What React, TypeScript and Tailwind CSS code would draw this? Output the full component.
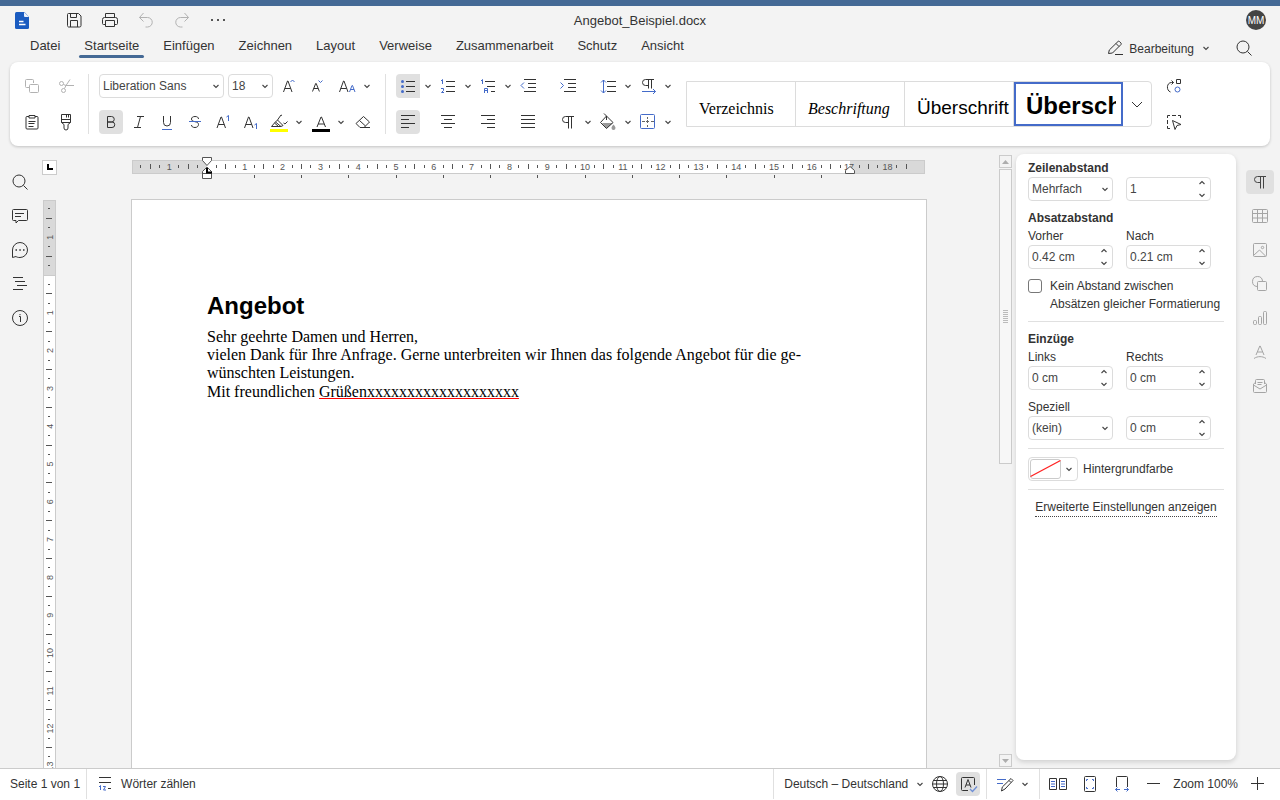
import type { ReactNode } from "react";

const BLUE = "#446bc9";
const CM = 37.8;

function Icon({ children, className = "" }: { children: ReactNode; className?: string }) {
  return (
    <svg width="24" height="24" viewBox="0 0 24 24" fill="none" stroke="currentColor" strokeWidth="1" className={`shrink-0 ${className}`} aria-hidden="true">
      {children}
    </svg>
  );
}

function Chevron() {
  return (
    <svg width="8" height="8" viewBox="0 0 8 8" fill="none" stroke="#444" strokeWidth="1.1" className="pointer-events-none shrink-0" aria-hidden="true">
      <path d="M1.5 3 4 5.5 6.5 3" />
    </svg>
  );
}

function Tool({ label, children, active = false, disabled = false }: { label: string; children: ReactNode; active?: boolean; disabled?: boolean }) {
  return (
    <button type="button" aria-label={label} disabled={disabled} className={`flex h-6 w-6 shrink-0 items-center justify-center rounded ${active ? "bg-[#e0e0e0]" : ""} ${disabled ? "text-[#b2b2b2]" : ""}`}>
      <Icon>{children}</Icon>
    </button>
  );
}

function Split({ label, children, active = false }: { label: string; children: ReactNode; active?: boolean }) {
  return (
    <div className="flex w-10 shrink-0 items-center">
      <button type="button" aria-label={label} className={`flex h-6 w-6 items-center justify-center rounded-l ${active ? "bg-[#e0e0e0]" : ""}`}>
        <Icon>{children}</Icon>
      </button>
      <button type="button" aria-label={`${label}: Optionen`} className="flex h-6 w-4 items-center justify-center">
        <Chevron />
      </button>
    </div>
  );
}

function Separator() {
  return <div className="w-px shrink-0 self-stretch bg-[#e0e0e0]" />;
}

function SelectBox({ label, value, className }: { label: string; value: string; className: string }) {
  return (
    <div className={`relative flex h-6 items-center ${className}`}>
      <select aria-label={label} defaultValue={value} className="h-6 w-full appearance-none rounded border border-[#dcdcdc] bg-white pl-[3px] text-xs text-[#444]">
        <option>{value}</option>
      </select>
      <span className="pointer-events-none absolute right-1 flex">
        <Chevron />
      </span>
    </div>
  );
}

function Spinner({ id, label, value }: { id: string; label?: string; value: string }) {
  return (
    <div className="flex h-6 w-[85px] items-center rounded border border-[#dcdcdc] bg-white">
      <input id={id} aria-label={label} defaultValue={value} className="w-full min-w-0 flex-1 bg-transparent pl-[3px] text-xs text-[#444] outline-none" />
      <div className="flex flex-col gap-1 pr-1">
        <button type="button" aria-label="Erhöhen" className="flex h-2 rotate-180"><Chevron /></button>
        <button type="button" aria-label="Verringern" className="flex h-2"><Chevron /></button>
      </div>
    </div>
  );
}

/* Icon shapes shared by several buttons */
const searchShape = (
  <>
    <circle cx="11" cy="11" r="6" />
    <path d="m15.5 15.5 4 4" />
  </>
);
const pilcrowShape = <path d="M18 6.5H9.5a3 3 0 0 0 0 6h3M12.5 6.5v12M15.5 6.5v12" />;

function TitleBar() {
  return (
    <div className="grid h-7 grid-cols-[1fr_auto_1fr] items-center">
      <div className="flex items-center pl-2.5">
        <svg width="24" height="24" viewBox="0 0 24 24" className="mr-[22px]" aria-hidden="true">
          <path d="M6.500 4h8l4.500 5v10.500a1.500 1.500 0 0 1-1.500 1.500h-11a1.500 1.500 0 0 1-1.500-1.500v-14a1.500 1.500 0 0 1 1.500-1.500z" fill="#1a5bc0" />
          <path d="M14 4 19 9h-4a1 1 0 0 1-1-1z" fill="#e9f0fc" />
          <path d="M9 13.500h4.500M9 16.500h6.500" stroke="#fff" strokeWidth="1.300" />
        </svg>
        <button type="button" aria-label="Speichern" className="flex w-9 justify-center">
          <Icon><path d="M6.500 5.500h10l2.500 2.500v9.500a1.500 1.500 0 0 1-1.500 1.500h-11A1.500 1.500 0 0 1 5.500 17.500v-11a1 1 0 0 1 1-1zM8.500 5.500v4h6v-4M8.500 19v-6.500h7V19" /></Icon>
        </button>
        <button type="button" aria-label="Drucken" className="flex w-9 justify-center">
          <Icon><path d="M7.500 9.500v-4h9v4M7.500 16.500h-2a1 1 0 0 1-1-1v-4a2 2 0 0 1 2-2h11a2 2 0 0 1 2 2v4a1 1 0 0 1-1 1h-2M7.500 12.500h9v6h-9z" /></Icon>
        </button>
        <button type="button" aria-label="Rückgängig" disabled className="flex w-9 justify-center text-[#b2b2b2]">
          <Icon><path d="m9.500 5-4 4.500 4 4M5.500 9.500h8a4.500 4.500 0 0 1 0 9.500h-2" /></Icon>
        </button>
        <button type="button" aria-label="Wiederholen" disabled className="flex w-9 justify-center text-[#b2b2b2]">
          <Icon><path d="m14.500 5 4 4.500-4 4M18.500 9.500h-8a4.500 4.500 0 0 0 0 9.500h2" /></Icon>
        </button>
        <button type="button" aria-label="Mehr" className="flex w-9 justify-center text-[#555]">
          <Icon><path d="M5 12h2M11 12h2M17 12h2" strokeWidth="2" /></Icon>
        </button>
      </div>
      <h1 className="pt-0.5 text-[13px]">Angebot_Beispiel.docx</h1>
      <div className="flex justify-end pr-3.5">
        <span className="flex h-5 w-5 items-center justify-center rounded-full bg-[#444] text-[10px] text-white">MM</span>
      </div>
    </div>
  );
}

const tabs = ["Datei", "Startseite", "Einfügen", "Zeichnen", "Layout", "Verweise", "Zusammenarbeit", "Schutz", "Ansicht"];

function TabBar() {
  return (
    <div className="flex h-7 items-start justify-between pl-[25px]">
      <nav className="flex gap-3.5" aria-label="Register">
        {tabs.map((tab) => (
          <button key={tab} type="button" className="flex flex-col text-[13px]">
            <span className="px-[5px] pt-[3px] leading-[18px]">{tab}</span>
            <span className={`h-[3px] w-full rounded-full ${tab === "Startseite" ? "bg-[#446995]" : ""}`} />
          </button>
        ))}
      </nav>
      <div className="flex h-7 items-center pr-6">
        <button type="button" className="flex items-center text-xs">
          <Icon><path d="m5.500 17.500.800-3.500 8.700-8.500a1 1 0 0 1 1.400 0l1.600 1.600a1 1 0 0 1 0 1.400L9.500 17zM13 7.500l3 3M12 18.500h8" /></Icon>
          <span className="pt-px pr-2 pl-[2px]">Bearbeitung</span>
          <Chevron />
        </button>
        <button type="button" aria-label="Suchen" className="ml-[22px] flex">
          <Icon>{searchShape}</Icon>
        </button>
      </div>
    </div>
  );
}

function ClipboardGroup() {
  return (
    <div className="grid grid-cols-2 gap-x-2.5 gap-y-3">
      <Tool label="Kopieren" disabled><path d="M9 13.500H6.500a1 1 0 0 1-1-1v-6a1 1 0 0 1 1-1h6a1 1 0 0 1 1 1V9M10.500 10.500h7a1 1 0 0 1 1 1v6a1 1 0 0 1-1 1h-7a1 1 0 0 1-1-1v-6a1 1 0 0 1 1-1z" /></Tool>
      <Tool label="Ausschneiden" disabled><circle cx="7.500" cy="9.500" r="2" /><circle cx="9.500" cy="16.500" r="2" /><path d="M9.500 10.500 12 11.500h8M10.500 14.500 12 11.500l4-6" /></Tool>
      <Tool label="Einfügen"><path d="M9 6.500H7a1 1 0 0 0-1 1V18a1 1 0 0 0 1 1h10a1 1 0 0 0 1-1V7.500a1 1 0 0 0-1-1h-2M9 5.500h6v2.500H9zM8.500 11.500h7M8.500 13.500h6M8.500 16.500h5" /></Tool>
      <Tool label="Format übertragen"><path d="M7.500 4.500h9v8h-9zM7.500 9.500h9M12.500 4.500v3M14.500 4.500v3M7.500 12.500l2.500 2v3.500a2 2 0 0 0 4 0v-3.500l2.500-2" /></Tool>
    </div>
  );
}

function FontGroup() {
  return (
    <div className="flex flex-col gap-3">
      <div className="flex gap-1">
        <SelectBox label="Schriftart" value="Liberation Sans" className="w-[125px]" />
        <SelectBox label="Schriftgröße" value="18" className="w-[45px]" />
        <Tool label="Schrift vergrößern"><path d="m6.500 18 4-11h.500l4 11M7.700 14.500h6" /><path d="m13.500 8 2-2 2 2" stroke={BLUE} /></Tool>
        <Tool label="Schrift verkleinern"><path d="m7.500 17.500 3.200-8h.500l3.200 8M8.700 14.500h4.500" /><path d="m13.500 6.500 2 2 2-2" stroke={BLUE} /></Tool>
        <div className="flex w-10">
          <button type="button" aria-label="Groß-/Kleinschreibung" className="flex h-6 w-7 items-center justify-center">
            <Icon><path d="m4.500 18 4-11H9l4 11M5.700 14.500h6" /><path d="m14.500 18 2.500-6.500h.500L20 18M15.500 15.500h3.500" stroke={BLUE} /></Icon>
          </button>
          <button type="button" aria-label="Groß-/Kleinschreibung: Optionen" className="flex h-6 w-3 items-center justify-center"><Chevron /></button>
        </div>
      </div>
      <div className="flex gap-1">
        <Tool label="Fett" active><path d="M8.500 6.500h4a2.500 2.500 0 0 1 0 5.500h-4zM8.500 12h4.500a2.700 2.700 0 0 1 0 5.500H8.500z" /></Tool>
        <Tool label="Kursiv"><path d="M10 6.500h7M7 17.500h7M13.500 6.500l-3 11" /></Tool>
        <Tool label="Unterstrichen"><path d="M8.500 6v6.500a3.500 3.500 0 0 0 7 0V6" /><path d="M7 19.500h10" stroke={BLUE} /></Tool>
        <Tool label="Durchgestrichen"><path d="M15.500 9c0-1.700-1.300-2.500-3.500-2.500S8.500 7.500 8.500 9s1 2.200 3.500 2.700c2.500.500 3.500 1.300 3.500 2.800s-1.200 3-3.500 3-3.500-1-3.500-2.500" /><path d="M6 11.500h12" stroke={BLUE} /></Tool>
        <Tool label="Hochgestellt"><path d="m6 18 4-11h.500l4 11M7.200 14.500h6" /><path d="m15.500 7 2-1.500V11" stroke={BLUE} /></Tool>
        <Tool label="Tiefgestellt"><path d="m5.500 18 4-11h.500l4 11M6.700 14.500h6" /><path d="m15.500 15 2-1.500V19" stroke={BLUE} /></Tool>
        <div className="flex gap-0.5">
          <Split label="Hervorhebungsfarbe">
            <path d="m10.500 10 3.500-5 1 .500M10.500 10l5.500 5.500M16.500 13l1.500 1 2.500-2.500M8.500 12l5.500 4.500H4.500L7.500 13l3-3M7.500 13l4 3.500M16 15.500l-2 1" />
            <path d="M3 20.500h18" stroke="#ff0" strokeWidth="3" />
          </Split>
          <Split label="Schriftfarbe">
            <path d="m8 17 4-10h.500l4 10M9.200 14h6" />
            <path d="M3 20.500h18" stroke="#000" strokeWidth="3" />
          </Split>
          <Tool label="Formatierung löschen"><path d="m5 13.500 7.500-7 6 5.500-5.500 5.500H9zM8.500 10.500l6 5.500M11 17.500h8" /></Tool>
        </div>
      </div>
    </div>
  );
}

function ParagraphGroup() {
  return (
    <div className="grid grid-cols-[repeat(7,40px)] gap-y-3">
      <Split label="Aufzählung" active><path d="M10 7.500h9M10 12.500h9M10 17.500h9" /><g fill={BLUE} stroke="none"><circle cx="6.500" cy="7.500" r="1.500" /><circle cx="6.500" cy="12.500" r="1.500" /><circle cx="6.500" cy="17.500" r="1.500" /></g></Split>
      <Split label="Nummerierung"><path d="M10 7.500h9M10 12.500h9M10 17.500h9" /><path d="m5 7 1.500-1.500V10M5 14.500h2.500v2L5.500 18.500H8" stroke={BLUE} /></Split>
      <Split label="Gliederung"><path d="M9 7.500h10M11 12.500h8M15 17.500h4" /><path d="m5 7 1.500-1.500V10M8.500 19v-4.500h3V19M8.500 16.500h3" stroke={BLUE} /></Split>
      <Tool label="Einzug verkleinern"><path d="M8 5.500h12M12 9.500h8M12 13.500h8M8 17.500h12" /><path d="M8 8.500 5 11.500l3 3" stroke={BLUE} /></Tool>
      <Tool label="Einzug vergrößern"><path d="M8 5.500h12M12 9.500h8M12 13.500h8M8 17.500h12" /><path d="m4.500 8.500 3 3-3 3" stroke={BLUE} /></Tool>
      <Split label="Zeilenabstand"><path d="M11 7.500h9M11 12.500h9M11 17.500h9" /><path d="M7.500 6v13M5 8.500 7.500 6 10 8.500M5 16.500 7.500 19l2.500-2.500" stroke={BLUE} /></Split>
      <Split label="Textrichtung"><path d="M18 5.500H9.500a3 3 0 0 0 0 6h3M12.500 5.500v9M15.500 5.500v9" /><path d="M6 17.500h13.500M17 15l2.500 2.500L17 20" stroke={BLUE} /></Split>
      <Tool label="Linksbündig" active><path d="M5 5.500h14M5 9.500h8M5 13.500h14M5 17.500h8" /></Tool>
      <Tool label="Zentriert"><path d="M5 5.500h14M8 9.500h8M5 13.500h14M8 17.500h8" /></Tool>
      <Tool label="Rechtsbündig"><path d="M5 5.500h14M11 9.500h8M5 13.500h14M11 17.500h8" /></Tool>
      <Tool label="Blocksatz"><path d="M5 5.500h14M5 9.500h14M5 13.500h14M5 17.500h14" /></Tool>
      <Split label="Nicht druckbare Zeichen">{pilcrowShape}</Split>
      <Split label="Schattierung">
        <path d="M6 13h11l-6.500 5.500z" fill="#999" stroke="none" />
        <path d="m10.500 6 6.500 6.500-6.500 6-6-6zM8 3.500l2.500 2.500v4" />
        <path d="M17.500 14.500c1.300 1.700 2 2.500 2 3.500a2 2 0 0 1-4 0c0-1 .700-1.800 2-3.500z" fill="#999" stroke="none" />
      </Split>
      <Split label="Rahmen"><path d="M11.500 7v2M11.500 10v3M11.500 15v2M6 11.500h3M10 11.500h3M15 11.500h3" stroke="#666" /><rect x="4.500" y="4.500" width="14" height="14" rx="1" stroke={BLUE} /></Split>
    </div>
  );
}

function StyleGallery() {
  const cell = "flex h-full w-[109px] items-center overflow-hidden border-r border-[#dcdcdc] pl-3 text-black";
  return (
    <div className="flex h-[46px] shrink-0 self-center rounded-r border border-[#dcdcdc]">
      <button type="button" className={`${cell} pt-2.5 font-['Liberation_Serif',serif] text-base`}>Verzeichnis</button>
      <button type="button" className={`${cell} pt-2.5 font-['Liberation_Serif',serif] text-base italic`}>Beschriftung</button>
      <button type="button" className={`${cell} pt-2 text-[19px]`}>Überschrift</button>
      <button type="button" className="flex h-full w-[109px] items-center border-2 border-[#446bc9] pr-[5px] pl-2.5 text-2xl font-bold text-black">
        <span className="overflow-hidden pt-1">Überschrift</span>
      </button>
      <button type="button" aria-label="Weitere Formatvorlagen" className="flex h-full w-7 items-center justify-center">
        <Icon><path d="m7 10 5 5 5-5" /></Icon>
      </button>
    </div>
  );
}

function Ribbon() {
  return (
    <div className="mx-2.5 flex gap-2.5 rounded-lg bg-white px-2.5 py-3 shadow-[0_1px_3px_rgba(0,0,0,0.2)]">
      <ClipboardGroup />
      <Separator />
      <FontGroup />
      <Separator />
      <ParagraphGroup />
      <StyleGallery />
      <div className="flex flex-col gap-3">
        <Tool label="Ersetzen"><path d="M8.500 18c-4.500-1.500-4-9.500 1-9.500h2M9.500 6.500l2 2-2 2M14.500 5.500h4v4h-4z" /><circle cx="15.500" cy="15.500" r="2.500" stroke={BLUE} /></Tool>
        <Tool label="Auswählen"><path d="M5.500 8V5.500H8M10 5.500h4M16 5.500h2.500V8M5.500 10v4M5.500 16v2.500H8M10.500 10.500l8.500 4-4 1-2 4z" /></Tool>
      </div>
    </div>
  );
}

function LeftBar() {
  return (
    <aside className="flex w-10 shrink-0 flex-col items-center gap-2.5 pt-6">
      <Tool label="Suche">{searchShape}</Tool>
      <Tool label="Kommentare"><path d="M5.500 5.500h13a1 1 0 0 1 1 1v9a1 1 0 0 1-1 1h-8l-2.500 2.500v-2.500H5.500a1 1 0 0 1-1-1v-9a1 1 0 0 1 1-1zM7 9.500h9M7 12.500h6" /></Tool>
      <Tool label="Chat"><path d="M4.500 19.500v-7.500a7.500 7.500 0 1 1 7.500 7.500c-2 0-3-.300-4-1z" /><path d="M7.500 12h1.500M11.300 12h1.500M15 12h1.500" strokeWidth="1.500" /></Tool>
      <Tool label="Überschriften"><path d="M5 5.500h10M7 9.500h10M9 13.500h10M5 17.500h10" /></Tool>
      <Tool label="Informationen"><circle cx="12" cy="12" r="7.500" /><path d="M11 10.500h1.500V16M12 8v1.200" /></Tool>
    </aside>
  );
}

function RightBar() {
  return (
    <aside className="flex w-11 shrink-0 flex-col items-center gap-2.5 pt-6 pl-1 text-[#a5a5a5]">
      <button type="button" aria-label="Absatzeinstellungen" className="flex h-6 w-7 items-center justify-center rounded bg-[#e0e0e0] text-[#444]"><Icon>{pilcrowShape}</Icon></button>
      <Tool label="Tabelle"><path d="M4.500 6.500a1 1 0 0 1 1-1h13a1 1 0 0 1 1 1v11a1 1 0 0 1-1 1h-13a1 1 0 0 1-1-1zM4.500 9.500h15M4.500 14h15M9.500 5.500v13M14.500 5.500v13" /></Tool>
      <Tool label="Bild"><rect x="5.500" y="5.500" width="13" height="13" rx="1" /><circle cx="14.500" cy="9.500" r="1.200" /><path d="m5.500 17.500 6-5.500 6 6" /></Tool>
      <Tool label="Form"><path d="M9 14.500a5 5 0 1 1 5.500-5.500" /><rect x="9.500" y="9.500" width="9" height="9" rx="1" /></Tool>
      <Tool label="Diagramm"><rect x="5.500" y="14.500" width="3" height="4" rx="1" /><rect x="10.500" y="10.500" width="3" height="8" rx="1" /><rect x="15.500" y="5.500" width="3" height="13" rx="1" /></Tool>
      <Tool label="TextArt"><path d="m8 15 3.800-9h.400l3.800 9M9.300 12h5.400M6 18.500c3.500-2.500 8.500-2.500 12 0" /></Tool>
      <Tool label="Seriendruck"><path d="M7.500 10V6.500a1 1 0 0 1 1-1h7a1 1 0 0 1 1 1V10M7.500 8.500l-2 1.500v7.500a1 1 0 0 0 1 1h11a1 1 0 0 0 1-1V10l-2-1.500M5.500 11l6.500 4 6.500-4M9.500 8.500h5M9.500 10.500h4" /></Tool>
    </aside>
  );
}

function HorizontalRuler() {
  const origin = 76;
  const marks = Array.from({ length: 82 }, (_, i) => i - 7).filter((q) => q !== 0 && q !== 68);
  return (
    <svg width="796" height="26" viewBox="0 0 796 26" className="shrink-0" aria-hidden="true">
      <rect x="1.500" y="5.500" width="792" height="13" fill="#fff" stroke="#cbcbcb" />
      <path d="M2 6h74v12H2zM719 6h74v12h-74z" fill="#d9d9d9" />
      {marks.map((q) => {
        const x = Math.floor(origin + (q * CM) / 4) + 0.5;
        if (x > 788) return null;
        if (q % 4 === 0)
          return <text key={q} x={origin + (q * CM) / 4} y="15" textAnchor="middle" fontSize="9" fill="#555">{Math.abs(q / 4)}</text>;
        return <path key={q} d={q % 2 === 0 ? `M${x} 9v5` : `M${x} 10v3`} stroke="#555" />;
      })}
      <text x="718" y="15" textAnchor="middle" fontSize="9" fill="#555">17</text>
      {Array.from({ length: 13 }, (_, i) => (
        <path key={i} d={`M${Math.floor(origin + (i + 1) * CM * 1.25) + 0.5} 20v3`} stroke="#555" />
      ))}
      <path d="M71.500 2.500h9v3l-4.500 5-4.500-5zM71.500 23.500v-7l4.500-4.500 4.500 4.500v7zM71.500 18.500h9" fill="#fff" stroke="#555" />
      <path d="M76 13v4.500h5" fill="none" stroke="#000" strokeWidth="2" />
      <path d="M714.500 18.500v-3l4.500-4 4.500 4v3z" fill="#fff" stroke="#555" />
    </svg>
  );
}

function VerticalRuler() {
  const origin = 75;
  return (
    <svg width="13" height="1123" viewBox="0 0 13 1123" className="shrink-0" aria-hidden="true">
      <rect x="0.500" y="0.500" width="12" height="1122" fill="#fff" stroke="#cbcbcb" />
      <path d="M1 1h11v75H1z" fill="#d9d9d9" />
      <path d="M1 75.500h11" stroke="#cbcbcb" />
      {Array.from({ length: 100 }, (_, i) => i - 7).map((q) => {
        if (q === 0) return null;
        const y = origin + (q * CM) / 4;
        const line = Math.floor(y) + 0.5;
        if (q % 4 === 0)
          return <text key={q} x="0" y="0" transform={`translate(10 ${y}) rotate(-90)`} textAnchor="middle" fontSize="9" fill="#555">{Math.abs(q / 4)}</text>;
        return <path key={q} d={q % 2 === 0 ? `M3 ${line}h6` : `M5 ${line}h2`} stroke="#555" />;
      })}
    </svg>
  );
}

function Editor() {
  return (
    <main className="flex min-w-0 flex-1">
      <div className="flex w-[19px] shrink-0 flex-col overflow-hidden pt-3.5 pl-[2px]">
        <button type="button" aria-label="Tabstopp" className="mb-[25px] flex h-[15px] w-[15px] shrink-0 items-center justify-center border border-[#cbcbcb] bg-white">
          <svg width="7" height="7" viewBox="0 0 7 7" fill="none" stroke="#000" strokeWidth="2"><path d="M2 0v5h5" /></svg>
        </button>
        <div className="flex pl-px"><VerticalRuler /></div>
      </div>
      <div className="flex min-w-0 flex-1 flex-col items-center overflow-hidden pt-[9px]">
        <HorizontalRuler />
        <article className="mt-[18px] min-h-[1123px] w-[796px] shrink-0 border border-[#cbcbcb] bg-white pt-[92px] pr-[76px] pl-[75px] text-black">
          <h2 className="text-2xl leading-7 font-bold">Angebot</h2>
          <div className="pt-2 font-['Liberation_Serif',serif] text-base leading-[18px] hyphens-manual">
            <p>Sehr geehrte Damen und Herren,</p>
            <p>vielen Dank für Ihre Anfrage. Gerne unterbreiten wir Ihnen das folgende Angebot für die ge&shy;wünschten Leistungen.</p>
            <p className="pt-px">Mit freundlichen <span className="underline decoration-1 underline-offset-1 [text-decoration-color:#f00] [text-decoration-skip-ink:none]">Grüßenxxxxxxxxxxxxxxxxxxx</span></p>
          </div>
        </article>
      </div>
      <div className="flex w-[17px] shrink-0 flex-col pt-[9px] pb-px">
        <button type="button" aria-label="Nach oben" className="flex h-[13px] w-[13px] items-center justify-center border border-[#cbcbcb]">
          <svg width="7" height="4" viewBox="0 0 7 4" fill="#adadad"><path d="M0 4 3.500 0 7 4z" /></svg>
        </button>
        <div className="flex-1 pt-px">
          <div className="flex h-[295px] w-[13px] flex-col items-center justify-center gap-px border border-[#cbcbcb] bg-[#f7f7f7]">
            {Array.from({ length: 7 }, (_, i) => <span key={i} className="h-px w-[5px] bg-[#bbb]" />)}
          </div>
        </div>
        <button type="button" aria-label="Nach unten" className="flex h-[13px] w-[13px] items-center justify-center border border-[#cbcbcb]">
          <svg width="7" height="4" viewBox="0 0 7 4" fill="#adadad"><path d="M0 0h7L3.500 4z" /></svg>
        </button>
      </div>
    </main>
  );
}

function ParagraphPanel() {
  const row = "grid grid-cols-[85px_85px] gap-x-[13px]";
  return (
    <section className="mt-2 mb-2 flex w-[220px] shrink-0 flex-col gap-2 rounded-lg bg-white px-3 pt-[5px] text-xs leading-[18px] shadow-[0_2px_5px_rgba(0,0,0,0.15)]">
      <div>
        <h3 className="font-bold">Zeilenabstand</h3>
        <div className={row}>
          <SelectBox label="Zeilenabstand" value="Mehrfach" className="w-[85px]" />
          <Spinner id="line" label="Wert des Zeilenabstands" value="1" />
        </div>
      </div>
      <div>
        <h3 className="font-bold">Absatzabstand</h3>
        <div className={row}>
          <label htmlFor="before">Vorher</label>
          <label htmlFor="after">Nach</label>
          <Spinner id="before" value="0.42 cm" />
          <Spinner id="after" value="0.21 cm" />
        </div>
      </div>
      <label className="flex items-start">
        <input type="checkbox" className="mt-[2px] mr-2 h-3.5 w-3.5 shrink-0 appearance-none rounded-[3px] border border-[#777] bg-white" />
        <span className="whitespace-nowrap">Kein Abstand zwischen<br />Absätzen gleicher Formatierung</span>
      </label>
      <hr className="border-[#e0e0e0]" />
      <div>
        <h3 className="font-bold">Einzüge</h3>
        <div className={row}>
          <label htmlFor="left">Links</label>
          <label htmlFor="right">Rechts</label>
          <Spinner id="left" value="0 cm" />
          <Spinner id="right" value="0 cm" />
        </div>
      </div>
      <div>
        <p>Speziell</p>
        <div className={row}>
          <SelectBox label="Speziell" value="(kein)" className="w-[85px]" />
          <Spinner id="special" label="Wert des speziellen Einzugs" value="0 cm" />
        </div>
      </div>
      <hr className="border-[#e0e0e0]" />
      <div className="flex items-center gap-[5px]">
        <button type="button" aria-label="Hintergrundfarbe" className="flex h-6 w-[50px] items-center justify-between rounded border border-[#dcdcdc] pr-1 pl-px">
          <svg width="31" height="20" viewBox="0 0 31 20" fill="none"><rect x="0.500" y="0.500" width="30" height="19" rx="2.500" stroke="#cbcbcb" /><path d="M.500 17.500 30.500 1.500" stroke="#f22" strokeWidth="1.200" /></svg>
          <Chevron />
        </button>
        <span>Hintergrundfarbe</span>
      </div>
      <hr className="border-[#e0e0e0]" />
      <button type="button" className="self-center border-b border-dotted border-[#444] whitespace-nowrap">Erweiterte Einstellungen anzeigen</button>
    </section>
  );
}

function StatusBar() {
  return (
    <footer className="flex h-8 shrink-0 items-center border-t border-[#cbcbcb] bg-white pb-px text-xs">
      <span className="pr-1.5 pl-2.5 whitespace-nowrap">Seite 1 von 1</span>
      <Separator />
      <button type="button" className="flex items-center gap-1 pl-1.5">
        <Icon><path d="M6 5.500h12M6 10.500h12M15 16.500h3" /><path d="m6 15 1.500-1.500V18M10 14.500h2.500l-2 3.500H13" stroke={BLUE} /></Icon>
        Wörter zählen
      </button>
      <div className="flex-1" />
      <div className="flex items-center self-stretch">
        <Separator />
        <button type="button" className="flex items-center gap-2 pr-1 pl-2.5">Deutsch – Deutschland<Chevron /></button>
        <Tool label="Sprache festlegen"><circle cx="12" cy="12" r="7.500" /><ellipse cx="12" cy="12" rx="3.500" ry="7.500" /><path d="M5.500 8.500h13M4.500 12h15M5.500 15.500h13" /></Tool>
        <div className="mr-1.5 ml-1 flex"><Tool label="Rechtschreibprüfung" active><path d="M12 18.500H6.500a1 1 0 0 1-1-1v-11a1 1 0 0 1 1-1h11a1 1 0 0 1 1 1V13M9 15.500l3-8 3 8M10 13h4" /><path d="m14 17 2.500 2.500 4.500-5" stroke="#6f8fd6" strokeWidth="1.300" /></Tool></div>
        <Separator />
        <div className="mx-1.5"><Split label="Änderungen verfolgen"><path d="m8.500 19 .800-4 8.700-8.500 2 2-8 8.500zM16 8.500l2 2" /><path d="M4 7.500h9M4 11.500h6" stroke={BLUE} /></Split></div>
        <Separator />
        <div className="flex gap-2 pr-[7px] pl-1.5">
          <Tool label="Mehrere Seiten"><path d="M3.500 6.500h7v11h-7zM13.500 6.500h7v11h-7z" /><path d="M5 9.500h4M5 12h4M5 14.500h4M15 9.500h4M15 12h4M15 14.500h4" stroke={BLUE} /></Tool>
          <Tool label="Seite anpassen"><rect x="6.500" y="4.500" width="11" height="15" rx="1" /><path d="M8.500 9V7.500H10M14 7.500h1.500V9M8.500 15v1.500H10M14 16.500h1.500V15" stroke={BLUE} /></Tool>
          <Tool label="Breite anpassen"><path d="M6.500 15V5.500a1 1 0 0 1 1-1h9a1 1 0 0 1 1 1V15" /><path d="M10 17.500H5.500M7.500 15.500l-2 2 2 2M14 17.500h4.500M16.500 15.500l2 2-2 2" stroke={BLUE} /></Tool>
        </div>
        <Tool label="Verkleinern"><path d="M6 11.500h13" /></Tool>
        <span className="px-2 whitespace-nowrap">Zoom 100%</span>
        <div className="pr-2.5"><Tool label="Vergrößern"><path d="M5 11.500h13M11.500 5v13" /></Tool></div>
      </div>
    </footer>
  );
}

export default function App() {
  return (
    <div className="flex h-screen flex-col overflow-hidden bg-[#f3f3f3] font-['Liberation_Sans',Arial,sans-serif] text-[#333]">
      <header className="shrink-0 border-t-[6px] border-[#446995]">
        <TitleBar />
        <TabBar />
        <Ribbon />
      </header>
      <div className="flex min-h-0 flex-1">
        <LeftBar />
        <Editor />
        <ParagraphPanel />
        <RightBar />
      </div>
      <StatusBar />
    </div>
  );
}
